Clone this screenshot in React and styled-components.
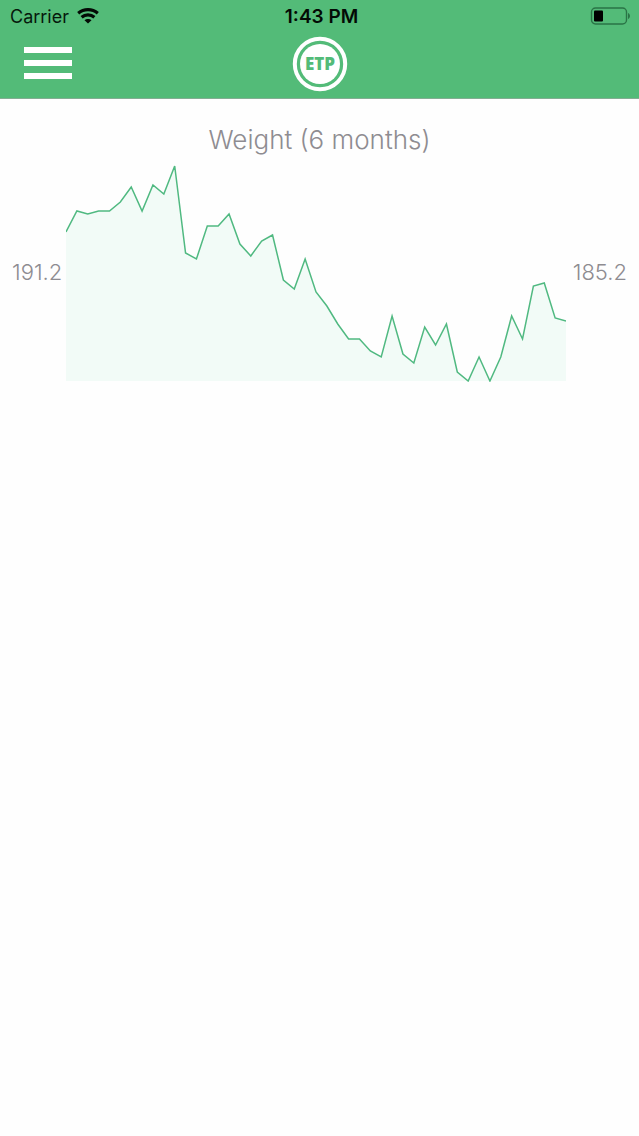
import React from 'react';
import styled, { createGlobalStyle } from 'styled-components';

const GlobalStyle = createGlobalStyle`
  * { box-sizing: border-box; }
  body {
    margin: 0;
    background: #fefefe;
    font-family: Inter, "Liberation Sans", sans-serif;
  }
`;

const Header = styled.header`
  background: #53bb78;
  border-bottom: 1px solid #84ad93;
`;

const TopGrid = styled.div`
  display: grid;
  grid-template-columns: 1fr auto 1fr;
  align-items: center;
`;

const StatusBar = styled(TopGrid)`
  height: 32px;
  padding: 0 8px 0 10px;
  font-size: 18px;
  line-height: 24px;
  color: #06180c;
`;

const Carrier = styled.div`
  display: flex;
  align-items: center;
  gap: 8px;
  padding-top: 2px;
`;

const Time = styled.time`
  padding: 2px 0 0 2px;
  font-size: 19px;
  font-weight: 600;
  color: #030a05;
`;

const Battery = styled.svg`
  justify-self: end;
`;

const NavBar = styled(TopGrid)`
  height: 66px;
  padding: 0 24px 2px;
`;

const MenuButton = styled.button`
  display: flex;
  flex-direction: column;
  gap: 7px;
  width: 48px;
  padding: 0 0 2px;
  border: 0;
  background: none;
  cursor: pointer;
`;

const MenuLine = styled.span`
  width: 100%;
  height: 6px;
  background: #fff;
`;

const Logo = styled.svg`
  display: block;
`;

const Main = styled.main`
  padding: 24px 12px;
  color: #8e8c91;
  font-weight: 350;
`;

const Title = styled.h1`
  margin: 0 0 8px;
  font-size: 26px;
  font-weight: 350;
  line-height: 34px;
  text-align: center;
`;

const ChartRow = styled.div`
  display: flex;
  align-items: center;
`;

const Value = styled.span`
  flex: 0 0 54px;
  padding-bottom: 4px;
  font-size: 22px;
  line-height: 32px;
  text-align: ${(p) => p.$align};
`;

const LastValue = styled(Value)`
  flex-basis: 61px;
`;

const Chart = styled.svg`
  flex: 1;
  min-width: 0;
  height: 217px;
`;

const levels = [
  149, 170, 167, 170, 170, 179, 194, 170, 196, 187, 215, 128, 122, 155, 155, 167,
  137, 125, 140, 146, 101, 92, 122, 89, 75, 57, 42, 42, 30, 24, 65, 27, 18, 54,
  36, 57, 9, 0, 24, 0, 24, 65, 42, 95, 98, 63, 60,
];

const points = levels
  .map((v, i) => `${((i * 499) / (levels.length - 1)).toFixed(2)},${216 - v}`)
  .join(' ');

function WeightChart() {
  return (
    <Chart viewBox="0 0 499 217" preserveAspectRatio="none" role="img" aria-label="Weight over 6 months">
      <polygon points={`0,216 ${points} 499,216`} fill="#f2fbf7" />
      <polyline
        points={points}
        fill="none"
        stroke="#50b981"
        strokeWidth="1.5"
        vectorEffect="non-scaling-stroke"
      />
    </Chart>
  );
}

export default function App() {
  return (
    <>
      <GlobalStyle />
      <Header>
        <StatusBar>
          <Carrier>
            <span>Carrier</span>
            <svg width="22" height="18" viewBox="0 0 22 18" aria-label="Wi-Fi">
              <g fill="none" stroke="#030a05" strokeWidth="3.2">
                <path d="M1.2 5.2C6.8.5 15.2.5 20.8 5.2" />
                <path d="M4.6 9.3c3.7-3.2 9.1-3.2 12.8 0" />
              </g>
              <path d="M11 15.6 7.5 12.3c1.9-1.7 5.1-1.7 7 0z" fill="#030a05" />
            </svg>
          </Carrier>
          <Time>1:43 PM</Time>
          <Battery width="41" height="18" viewBox="0 0 41 18" aria-label="Battery">
            <rect x="1.5" y="1" width="35" height="16" rx="4" fill="none" stroke="#2a7446" strokeWidth="1.4" />
            <rect x="4" y="3.5" width="9" height="11" rx="1" fill="#000" />
            <path d="M38 6c2.600 1 2.600 5 0 6z" fill="#2a7446" />
          </Battery>
        </StatusBar>
        <NavBar>
          <MenuButton aria-label="Menu">
            <MenuLine />
            <MenuLine />
            <MenuLine />
          </MenuButton>
          <Logo width="56" height="56" viewBox="0 0 56 56" aria-label="ETP">
            <circle cx="28" cy="28" r="25.2" fill="none" stroke="#fff" strokeWidth="4" />
            <circle cx="28" cy="28" r="20" fill="#fff" />
            <text
              x="28"
              y="34"
              textAnchor="middle"
              fontFamily='"Open Sans", "Noto Sans", sans-serif'
              fontSize="17"
              fontWeight="800"
              fill="#53bb78"
            >
              ETP
            </text>
          </Logo>
        </NavBar>
      </Header>
      <Main>
        <Title>Weight (6 months)</Title>
        <ChartRow>
          <Value $align="left">191.2</Value>
          <WeightChart />
          <LastValue $align="right">185.2</LastValue>
        </ChartRow>
      </Main>
    </>
  );
}
